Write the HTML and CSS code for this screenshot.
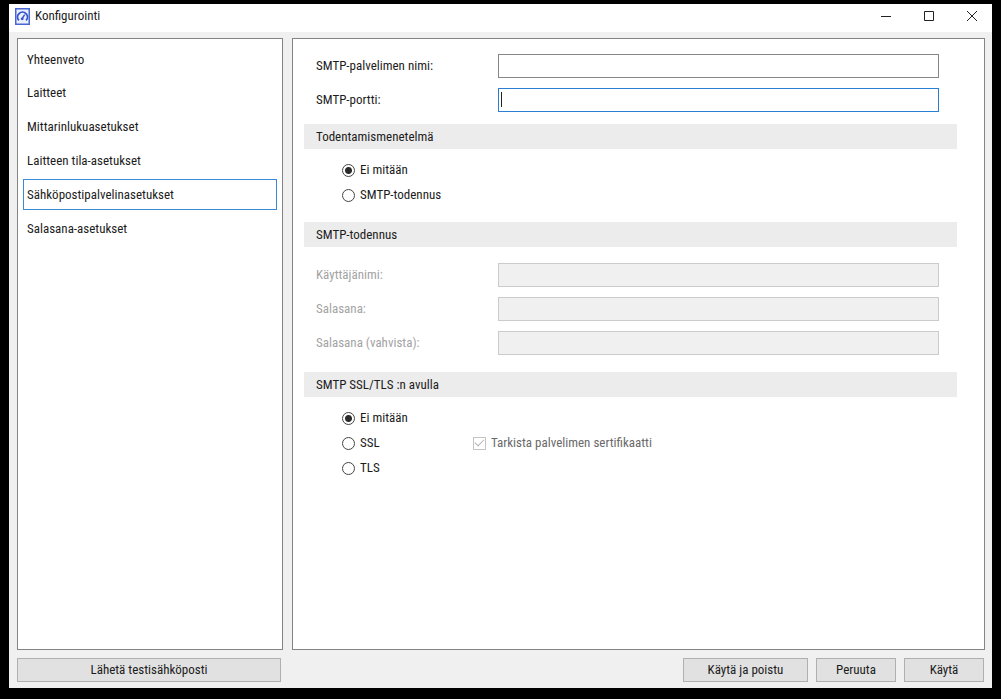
FILE: index.html
```html
<!DOCTYPE html>
<html lang="fi">
<head>
<meta charset="utf-8">
<title>Konfigurointi</title>
<link rel="stylesheet" href="styles.css">
</head>
<body>
<div class="window">
  <header class="titlebar">
    <svg class="app-icon" viewBox="0 0 15 17" aria-hidden="true">
      <rect x=".75" y=".75" width="13.5" height="15.5" fill="#e9effc" stroke="#4a66d4" stroke-width="1.5"/>
      <path d="M3.9 12.4A4.9 4.9 0 1 1 11.1 12.4" fill="none" stroke="#3350cc" stroke-width="1.8"/>
      <path d="M7.2 10.6L9.6 6.6" stroke="#3350cc" stroke-width="1.4"/>
      <circle cx="7.2" cy="10.8" r="1.4" fill="#3350cc"/>
    </svg>
    <h1 class="title">Konfigurointi</h1>
    <div class="window-controls">
      <button class="window-button" type="button" aria-label="Pienennä"><svg viewBox="0 0 12 12"><path d="M1 6.5H11"/></svg></button>
      <button class="window-button" type="button" aria-label="Suurenna"><svg viewBox="0 0 12 12"><path d="M1.5 1.5H10.5V10.5H1.5Z"/></svg></button>
      <button class="window-button" type="button" aria-label="Sulje"><svg viewBox="0 0 12 12"><path d="M1 1L11 11M11 1L1 11"/></svg></button>
    </div>
  </header>
  <main class="content">
    <nav class="panel sidebar">
      <a class="nav-item" href="#yhteenveto">Yhteenveto</a>
      <a class="nav-item" href="#laitteet">Laitteet</a>
      <a class="nav-item" href="#mittarit">Mittarinlukuasetukset</a>
      <a class="nav-item" href="#tila">Laitteen tila-asetukset</a>
      <a class="nav-item selected" href="#sahkoposti" aria-current="page">Sähköpostipalvelinasetukset</a>
      <a class="nav-item" href="#salasana">Salasana-asetukset</a>
    </nav>
    <form class="panel settings" id="settings">
      <div class="fields">
        <label for="server">SMTP-palvelimen nimi:</label>
        <input class="text-box" id="server" type="text">
        <label for="port">SMTP-portti:</label>
        <input class="text-box active" id="port" type="text" autofocus>
      </div>
      <h2 class="section-title">Todentamismenetelmä</h2>
      <div class="choices">
        <label class="choice"><input class="radio" type="radio" name="auth" checked>Ei mitään</label>
        <label class="choice"><input class="radio" type="radio" name="auth">SMTP-todennus</label>
      </div>
      <h2 class="section-title">SMTP-todennus</h2>
      <div class="fields disabled">
        <label for="user">Käyttäjänimi:</label>
        <input class="text-box" id="user" type="text" disabled>
        <label for="pass">Salasana:</label>
        <input class="text-box" id="pass" type="password" disabled>
        <label for="pass2">Salasana (vahvista):</label>
        <input class="text-box" id="pass2" type="password" disabled>
      </div>
      <h2 class="section-title">SMTP SSL/TLS :n avulla</h2>
      <div class="choices">
        <label class="choice"><input class="radio" type="radio" name="tls" checked>Ei mitään</label>
        <div class="choice-row">
          <label class="choice"><input class="radio" type="radio" name="tls">SSL</label>
          <label class="choice certificate"><input class="check" type="checkbox" checked disabled>Tarkista palvelimen sertifikaatti</label>
        </div>
        <label class="choice"><input class="radio" type="radio" name="tls">TLS</label>
      </div>
    </form>
  </main>
  <footer class="actions">
    <button class="button test" type="button">Lähetä testisähköposti</button>
    <button class="button wide" type="submit" form="settings">Käytä ja poistu</button>
    <button class="button" type="button">Peruuta</button>
    <button class="button" type="button">Käytä</button>
  </footer>
</div>
</body>
</html>
```
FILE: styles.css
```css
* {
  box-sizing: border-box;
}

body {
  margin: 0;
  min-height: 100vh;
  display: flex;
  padding: 4px 9px 11px;
  background: #000;
  color: #1c1c1c;
  font: 13px/16px "Roboto Condensed", Roboto, sans-serif;
}

input,
button {
  margin: 0;
  font: inherit;
  color: inherit;
}

.window {
  flex: 1;
  display: flex;
  flex-direction: column;
  background: #f0f0f0;
}

.titlebar {
  display: flex;
  align-items: center;
  height: 28px;
  padding: 0 6px;
  background: #fff;
}

.app-icon {
  width: 15px;
  height: 17px;
  margin: 0 5px 4px 0;
}

.title {
  margin: 0 0 4px;
  font-size: 13px;
  font-weight: 400;
}

.window-controls {
  display: flex;
  margin-left: auto;
}

.window-button {
  display: flex;
  justify-content: center;
  width: 43px;
  padding: 0 0 4px;
  border: 0;
  background: none;
}

.window-button:last-child {
  width: 28px;
  margin-left: 8px;
}

.window-button svg {
  width: 12px;
  height: 12px;
  fill: none;
  stroke: #222;
}

.content {
  flex: 1;
  display: flex;
  gap: 9px;
  padding: 6px 7px 8px 8px;
}

.panel {
  border: 1px solid #848484;
  background: #fff;
}

.sidebar {
  display: flex;
  flex-direction: column;
  gap: 3px;
  width: 266px;
  padding: 7px 5px;
}

.nav-item {
  display: flex;
  align-items: center;
  height: 31px;
  padding: 0 3px;
  border: 1px solid transparent;
  color: inherit;
  text-decoration: none;
}

.nav-item:first-child {
  height: 28px;
}

.nav-item.selected {
  border-color: #3a8ad6;
}

.settings {
  flex: 1;
  padding: 15px 27px 15px 11px;
}

.fields {
  display: grid;
  grid-template-columns: 182px 1fr;
  align-items: center;
  row-gap: 10px;
  padding: 0 18px 12px 12px;
}

.fields.disabled {
  padding-top: 16px;
  padding-bottom: 17px;
  color: #a3a3a3;
}

.text-box {
  width: 100%;
  height: 24px;
  padding: 0 2px;
  border: 1px solid #868686;
  border-radius: 0;
  background: #fff;
  outline: 0;
}

.text-box.active {
  border-color: #2b7fd3;
  background: linear-gradient(#222, #222) 2px 3px / 1px 15px no-repeat #fff;
  caret-color: transparent;
}

.text-box:disabled {
  border-color: #cbcbcb;
  background: #f0f0f0;
}

.section-title {
  margin: 0;
  padding: 5px 12px 4px;
  background: #ececec;
  font-size: 13px;
  font-weight: 400;
}

.choices {
  display: flex;
  flex-direction: column;
  align-items: flex-start;
  gap: 9px;
  padding: 13px 38px 19px;
}

.choice-row {
  display: flex;
}

.choice {
  display: flex;
  align-items: center;
  gap: 5px;
}

.choice-row .choice:first-child {
  width: 131px;
}

.certificate {
  color: #6a6a6a;
}

.radio,
.check {
  flex: none;
  appearance: none;
  width: 13px;
  height: 13px;
  border: 1px solid #444;
  background: #fff;
}

.radio {
  border-radius: 50%;
}

.radio:checked {
  background: radial-gradient(circle, #2b2b2b 3px, #fff 4px);
}

.check {
  border-color: #c4c4c4;
  display: grid;
  place-items: center;
}

.check:checked::before {
  content: "";
  width: 8px;
  height: 4px;
  margin-bottom: 3px;
  border: solid #b4b4b4;
  border-width: 0 0 1px 1px;
  rotate: -45deg;
}

.actions {
  display: flex;
  gap: 8px;
  padding: 0 8px 6px;
}

.button {
  width: 80px;
  height: 24px;
  padding: 0;
  border: 1px solid #b0b0b0;
  background: #e1e1e1;
}

.button.wide {
  width: 125px;
}

.button.test {
  width: 264px;
  margin-right: auto;
}
```
